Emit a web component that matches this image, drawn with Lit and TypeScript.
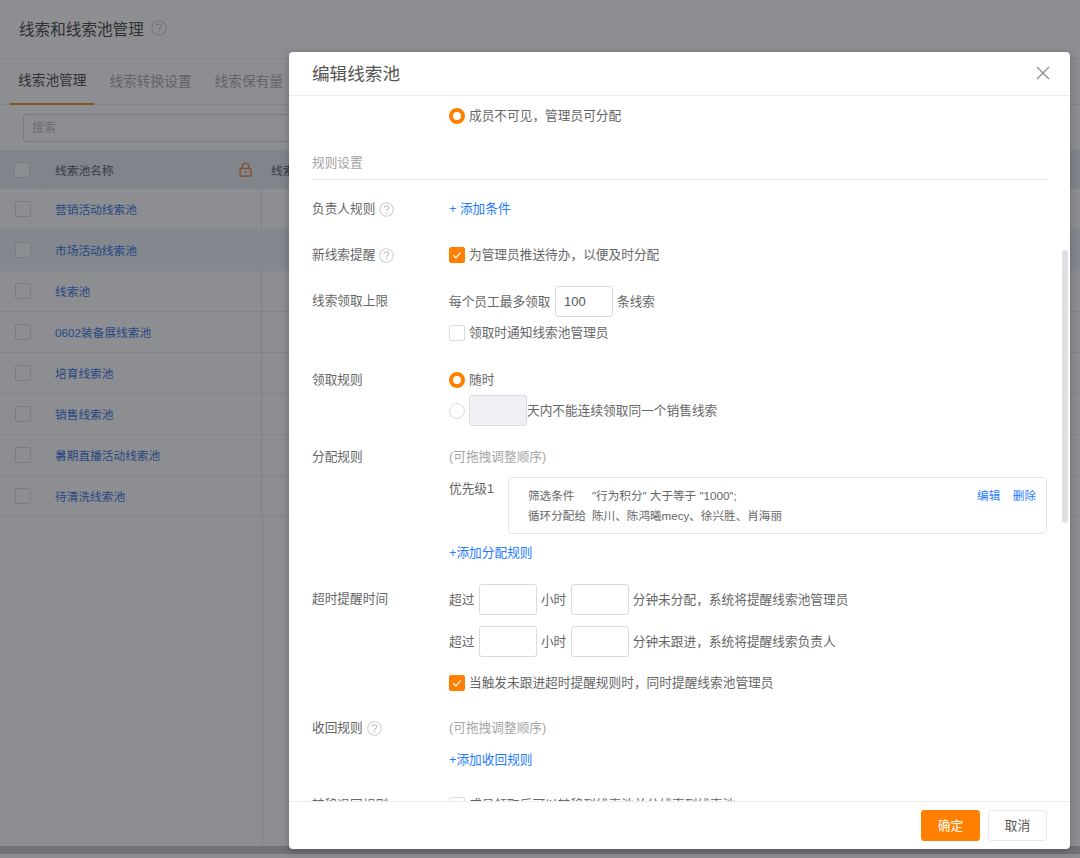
import { LitElement, html, css, svg } from 'lit';
import { customElement } from 'lit/decorators.js';

const rows = ['营销活动线索池', '市场活动线索池', '线索池', '0602装备展线索池', '培育线索池', '销售线索池', '暑期直播活动线索池', '待清洗线索池'];

const help = html`<svg class="help" viewBox="0 0 14 14" width="15" height="15">
  <circle cx="7" cy="7" r="6.3" fill="none" stroke="#d0d0d0" stroke-width="1"></circle>
  <path d="M4.9 5.4c0-1.2 1-1.9 2.1-1.9s2.1.7 2.1 1.8c0 1.6-2.1 1.5-2.1 3.1" fill="none" stroke="#bdbdbd" stroke-width="1"></path>
  <circle cx="7" cy="10.3" r=".7" fill="#bdbdbd"></circle>
</svg>`;

const check = svg`<svg viewBox="0 0 16 16" width="16" height="16"><path d="M4.2 8.2l2.7 2.6 4.9-5.4" fill="none" stroke="#fff" stroke-width="1.2"></path></svg>`;

@customElement('app-root')
export class AppRoot extends LitElement {
  static styles = css`
    :host {
      display: block;
      position: relative;
      height: 858px;
      overflow: hidden;
      background: #fff;
      font-family: "Liberation Sans", "Noto Sans CJK SC", sans-serif;
      font-size: 12.7px;
      color: #666;
    }
    .page {
      display: flex;
      flex-direction: column;
      height: 858px;
    }
    .top {
      height: 59px;
      flex: none;
      display: flex;
      align-items: center;
      gap: 7px;
      padding: 0 0 2px 19px;
      font-size: 15.6px;
      color: #444;
      border-bottom: 1px solid #ececec;
      box-sizing: border-box;
    }
    .top .help {
      width: 16px;
      height: 16px;
    }
    .tabs {
      height: 46px;
      flex: none;
      display: flex;
      gap: 15px;
      padding-left: 10px;
      font-size: 13.7px;
      color: #aaa;
      border-bottom: 1px solid #ececec;
      box-sizing: border-box;
    }
    .tab {
      display: flex;
      align-items: center;
      padding: 0 8px 4px 8px;
      margin-right: -8px;
      box-sizing: border-box;
      height: 46px;
    }
    .tab.on {
      color: #444;
      border-bottom: 2px solid #f08a24;
    }
    .search {
      height: 45px;
      flex: none;
      box-sizing: border-box;
      padding: 9px 0 0 23px;
    }
    .search div {
      width: 400px;
      height: 28px;
      box-sizing: border-box;
      border: 1px solid #d5d8dd;
      border-radius: 3px;
      padding-left: 8px;
      line-height: 26px;
      font-size: 12px;
      color: #bbb;
    }
    .table {
      flex: 1;
      min-height: 0;
      display: flex;
      flex-direction: column;
    }
    .tr {
      height: 41px;
      flex: none;
      display: grid;
      grid-template-columns: 45px 217px 1fr;
      box-sizing: border-box;
      border-bottom: 1px solid #e9ecf1;
    }
    .tr.head {
      height: 39px;
      background: #e7ebf2;
      border-bottom: none;
      color: #555;
      font-size: 11.7px;
    }
    .tr.sel {
      background: #eaf0f8;
    }
    .tr > div {
      display: flex;
      align-items: center;
      box-sizing: border-box;
    }
    .tr .c1 {
      border-right: 1px solid #e6e9ee;
    }
    .head .c0 {
      border-right: 1px solid #e0e4ea;
    }
    .tr > div:last-child {
      padding-left: 9px;
    }
    .tr .c0 {
      justify-content: center;
    }
    .tr .c1 {
      padding: 0 9px 2px 10px;
      justify-content: space-between;
      font-size: 11.7px;
      color: #2f6fe0;
    }
    .head .c1 {
      color: #555;
      padding-bottom: 1px;
    }
    .rest {
      flex: 1;
      display: grid;
      grid-template-columns: 263px 1fr;
    }
    .rest div:first-child {
      border-right: 1px solid #e6e9ee;
    }
    .hbar {
      flex: none;
      height: 8px;
      margin-bottom: 4px;
      background: #c6c6cc;
    }
    .box {
      width: 16px;
      height: 16px;
      box-sizing: border-box;
      border: 1px solid #d8dbe2;
      border-radius: 2px;
      background: #fff;
      flex: none;
    }
    .box.on {
      background: #ff8000;
      border-color: #ff8000;
    }
    .box svg {
      display: block;
      margin: -1px;
    }
    .mask {
      position: absolute;
      inset: 0;
      background: rgba(28, 29, 36, 0.5);
    }
    .modal {
      position: absolute;
      left: 289px;
      top: 52px;
      width: 781px;
      height: 797px;
      display: flex;
      flex-direction: column;
      background: #fff;
      border-radius: 4px;
      overflow: hidden;
      box-shadow: 0 2px 8px rgba(0, 0, 0, 0.25);
    }
    .mhead {
      flex: none;
      height: 44px;
      box-sizing: border-box;
      display: flex;
      align-items: center;
      justify-content: space-between;
      padding: 0 19px 2px 23px;
      border-bottom: 1px solid #ebecf0;
      font-size: 17.6px;
      color: #555;
    }
    .mbody {
      flex: 1;
      min-height: 0;
      overflow: hidden;
      position: relative;
      padding: 0 23px;
    }
    .thumb {
      position: absolute;
      right: 2px;
      top: 154px;
      width: 6px;
      height: 273px;
      border-radius: 3px;
      background: #dfe0e3;
    }
    .mfoot {
      flex: none;
      height: 48px;
      box-sizing: border-box;
      border-top: 1px solid #ebecf0;
      display: flex;
      justify-content: flex-end;
      align-items: flex-start;
      gap: 8px;
      padding: 8px 23px 0 0;
    }
    .btn {
      width: 59px;
      height: 31px;
      box-sizing: border-box;
      border-radius: 3px;
      display: flex;
      align-items: center;
      justify-content: center;
      padding-bottom: 2px;
      border: 1px solid #e6e8ee;
      color: #555;
    }
    .btn.primary {
      background: #ff8000;
      border-color: #ff8000;
      color: #fff;
    }
    .row {
      display: grid;
      grid-template-columns: 137px 1fr;
      line-height: 18px;
      color: #666;
    }
    .label {
      display: flex;
      align-items: center;
      gap: 4px;
      height: 18px;
    }
    .label.low {
      margin-top: 6px;
    }
    .ctl {
      display: flex;
      flex-direction: column;
      min-width: 0;
    }
    .line {
      display: flex;
      align-items: center;
      white-space: nowrap;
    }
    .line .box,
    .line .radio {
      margin-right: 4px;
    }
    .radio {
      width: 16px;
      height: 16px;
      box-sizing: border-box;
      border-radius: 50%;
      border: 1px solid #d8dbe2;
      background: #fff;
      flex: none;
    }
    .radio.on {
      border: 4px solid #ff8000;
    }
    .input {
      width: 58px;
      height: 31px;
      box-sizing: border-box;
      border: 1px solid #d8dbe2;
      border-radius: 3px;
      background: #fff;
      flex: none;
      display: flex;
      align-items: center;
      padding-left: 8px;
      margin: 0 4px 0 4.5px;
      color: #555;
      font-size: 13px;
    }
    .input.off {
      background: #f0f1f4;
      margin: 0;
    }
    .link {
      color: #1f7bff;
    }
    .muted {
      color: #a6a6a6;
    }
    .section {
      color: #a3a3a3;
      height: 22px;
      line-height: 22px;
      padding-bottom: 5px;
      margin-top: 27px;
      border-bottom: 1px solid #ebecf0;
    }
    .prio {
      display: flex;
      align-items: flex-start;
      margin-top: 11px;
    }
    .prio > span {
      width: 59px;
      flex: none;
      padding-top: 2px;
      line-height: 20px;
    }
    .card {
      flex: 1;
      height: 57px;
      box-sizing: border-box;
      border: 1px solid #e3e4e8;
      border-radius: 4px;
      padding: 8px 10px 0 19px;
      display: flex;
      justify-content: space-between;
      font-size: 11.6px;
      line-height: 19.5px;
    }
    .card .ops {
      display: flex;
      gap: 12.5px;
    }
    .pre {
      display: inline-block;
      width: 64px;
    }
    .first { margin-top: 11px; }
    .owner { margin-top: 20px; }
    .notice { margin-top: 28px; }
    .limit { margin-top: 22px; }
    .claim { margin-top: 29px; }
    .assign { margin-top: 22px; }
    .timeout { margin-top: 22px; }
    .recall { margin-top: 27px; }
    .transfer { margin-top: 27px; }
    .gap6 { margin-top: 6px; }
    .gap7 { margin-top: 7px; }
    .gap10 { margin-top: 10px; }
    .gap11 { margin-top: 11px; }
    .gap14 { margin-top: 14px; }
    .gap17 { margin-top: 17px; }
  `;

  render() {
    return html`
      <div class="page">
        <div class="top">线索和线索池管理 ${help}</div>
        <div class="tabs">
          <div class="tab on">线索池管理</div>
          <div class="tab">线索转换设置</div>
          <div class="tab">线索保有量</div>
        </div>
        <div class="search"><div>搜索</div></div>
        <div class="table">
          <div class="tr head">
            <div class="c0"><span class="box"></span></div>
            <div class="c1">
              线索池名称
              <svg viewBox="0 0 14 16" width="13" height="15">
                <path d="M3.5 7V4.5a3.5 3.5 0 0 1 7 0V7" fill="none" stroke="#e8791e" stroke-width="1.3"></path>
                <rect x="1.2" y="6.7" width="11.6" height="8.4" rx="1" fill="none" stroke="#e8791e" stroke-width="1.3"></rect>
                <rect x="6.4" y="9.8" width="1.3" height="2.2" fill="#e8791e"></rect>
              </svg>
            </div>
            <div>线索</div>
          </div>
          ${rows.map(
            (r, i) => html`<div class="tr ${i === 1 ? 'sel' : ''}">
              <div class="c0"><span class="box"></span></div>
              <div class="c1">${r}</div>
              <div></div>
            </div>`
          )}
          <div class="rest"><div></div><div></div></div>
          <div class="hbar"></div>
        </div>
      </div>
      <div class="mask"></div>
      <div class="modal">
        <div class="mhead">
          编辑线索池
          <svg viewBox="0 0 16 16" width="16" height="16">
            <path d="M2 2l12 12M14 2L2 14" fill="none" stroke="#8a8f99" stroke-width="1.3"></path>
          </svg>
        </div>
        <div class="mbody">
          <div class="row first">
            <div></div>
            <div class="ctl"><div class="line"><span class="radio on"></span>成员不可见，管理员可分配</div></div>
          </div>
          <div class="section">规则设置</div>
          <div class="row owner">
            <div class="label">负责人规则 ${help}</div>
            <div class="ctl"><div class="link">+ 添加条件</div></div>
          </div>
          <div class="row notice">
            <div class="label">新线索提醒 ${help}</div>
            <div class="ctl"><div class="line"><span class="box on">${check}</span>为管理员推送待办，以便及时分配</div></div>
          </div>
          <div class="row limit">
            <div class="label low">线索领取上限</div>
            <div class="ctl">
              <div class="line">每个员工最多领取<span class="input">100</span>条线索</div>
              <div class="line gap7"><span class="box"></span>领取时通知线索池管理员</div>
            </div>
          </div>
          <div class="row claim">
            <div class="label">领取规则</div>
            <div class="ctl">
              <div class="line"><span class="radio on"></span>随时</div>
              <div class="line gap6"><span class="radio"></span><span class="input off"></span>天内不能连续领取同一个销售线索</div>
            </div>
          </div>
          <div class="row assign">
            <div class="label">分配规则</div>
            <div class="ctl">
              <div class="muted">(可拖拽调整顺序)</div>
              <div class="prio">
                <span>优先级1</span>
                <div class="card">
                  <div>
                    <div><span class="pre">筛选条件</span>"行为积分" 大于等于 "1000";</div>
                    <div><span class="pre">循环分配给</span>陈川、陈鸿曦mecy、徐兴胜、肖海丽</div>
                  </div>
                  <div class="ops link"><span>编辑</span><span>删除</span></div>
                </div>
              </div>
              <div class="link gap10">+添加分配规则</div>
            </div>
          </div>
          <div class="row timeout">
            <div class="label low">超时提醒时间</div>
            <div class="ctl">
              <div class="line">超过<span class="input"></span>小时<span class="input"></span>分钟未分配，系统将提醒线索池管理员</div>
              <div class="line gap11">超过<span class="input"></span>小时<span class="input"></span>分钟未跟进，系统将提醒线索负责人</div>
              <div class="line gap17"><span class="box on">${check}</span>当触发未跟进超时提醒规则时，同时提醒线索池管理员</div>
            </div>
          </div>
          <div class="row recall">
            <div class="label">收回规则 ${help}</div>
            <div class="ctl">
              <div class="muted">(可拖拽调整顺序)</div>
              <div class="link gap14">+添加收回规则</div>
            </div>
          </div>
          <div class="row transfer">
            <div class="label">转移退回规则</div>
            <div class="ctl"><div class="line"><span class="box"></span>成员领取后可以转移到线索池并分线索到线索池</div></div>
          </div>
          <div class="thumb"></div>
        </div>
        <div class="mfoot">
          <div class="btn primary">确定</div>
          <div class="btn">取消</div>
        </div>
      </div>
    `;
  }
}
